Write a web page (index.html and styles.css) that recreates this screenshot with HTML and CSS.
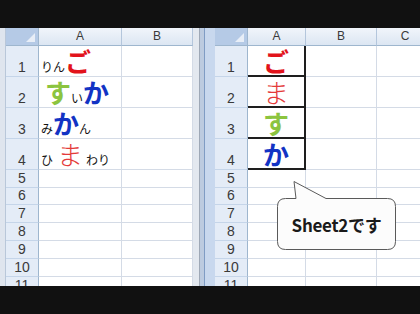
FILE: index.html
```html
<!DOCTYPE html>
<html lang="ja">
  <head>
    <meta charset="UTF-8" />
    <title>Sheet1 / Sheet2</title>
    <link rel="stylesheet" href="styles.css">
  </head>
  <body>
    <div class="screen">
      <div class="bar"></div>

      <div class="panes">
        <!-- Fenêtre gauche : Sheet1 -->
        <div class="pane pane-left">
          <div class="edge"></div>
          <div class="sheet sheet-one">
            <div class="corner"></div><div class="col">A</div><div class="col">B</div>

            <div class="row">1</div>
            <div class="cell words"><span class="small">りん</span><span class="big red">ご</span></div>
            <div class="cell"></div>

            <div class="row">2</div>
            <div class="cell words"><span class="big green indent">す</span><span class="small">い</span><span class="big blue">か</span></div>
            <div class="cell"></div>

            <div class="row">3</div>
            <div class="cell words"><span class="small">み</span><span class="big blue">か</span><span class="small">ん</span></div>
            <div class="cell"></div>

            <div class="row">4</div>
            <div class="cell words"><span class="small">ひ</span><span class="big thin gap">ま</span><span class="small">わり</span></div>
            <div class="cell"></div>

            <div class="row">5</div><div class="cell"></div><div class="cell"></div>
            <div class="row">6</div><div class="cell"></div><div class="cell"></div>
            <div class="row">7</div><div class="cell"></div><div class="cell"></div>
            <div class="row">8</div><div class="cell"></div><div class="cell"></div>
            <div class="row">9</div><div class="cell"></div><div class="cell"></div>
            <div class="row">10</div><div class="cell"></div><div class="cell"></div>
            <div class="row">11</div><div class="cell"></div><div class="cell"></div>
          </div>
          <div class="side"></div>
        </div>

        <div class="split"></div>

        <!-- Fenêtre droite : Sheet2 -->
        <div class="pane pane-right">
          <div class="sheet sheet-two">
            <div class="corner"></div><div class="col">A</div><div class="col">B</div><div class="col">C</div>

            <div class="row">1</div><div class="cell kana"><span class="big red">ご</span></div><div class="cell"></div><div class="cell"></div>
            <div class="row">2</div><div class="cell kana"><span class="big thin">ま</span></div><div class="cell"></div><div class="cell"></div>
            <div class="row">3</div><div class="cell kana"><span class="big green">す</span></div><div class="cell"></div><div class="cell"></div>
            <div class="row">4</div><div class="cell kana"><span class="big blue">か</span></div><div class="cell"></div><div class="cell"></div>

            <div class="row">5</div><div class="cell"></div><div class="cell"></div><div class="cell"></div>
            <div class="row">6</div><div class="cell"></div><div class="cell"></div><div class="cell"></div>
            <div class="row">7</div><div class="cell"></div><div class="cell"></div><div class="cell"></div>
            <div class="row">8</div><div class="cell"></div><div class="cell"></div><div class="cell"></div>
            <div class="row">9</div><div class="cell"></div><div class="cell"></div><div class="cell"></div>
            <div class="row">10</div><div class="cell"></div><div class="cell"></div><div class="cell"></div>
            <div class="row">11</div><div class="cell"></div><div class="cell"></div><div class="cell"></div>
          </div>

          <!-- Bulle -->
          <div class="balloon">
            <svg viewBox="0 0 120 70" xmlns="http://www.w3.org/2000/svg">
              <path d="M8.5 17.5 H19 L17 0.5 L49 17.5 H110.5 Q118.5 17.5 118.5 25.5 V60.5 Q118.5 68.5 110.5 68.5 H8.5 Q0.5 68.5 0.5 60.5 V25.5 Q0.5 17.5 8.5 17.5 Z" />
            </svg>
            <div class="balloon-text">Sheet2です</div>
          </div>
        </div>
      </div>

      <div class="bar bar-bottom"></div>
    </div>
  </body>
</html>
```

FILE: styles.css
```css
body {
  margin: 0;
  background-color: #111111;
  font-family: "Liberation Sans", Arial, sans-serif;
}

.screen {
  width: 420px;
  height: 314px;
  display: flex;
  flex-direction: column;
  overflow: hidden;
}

.bar {
  height: 28px;
  background-color: #111111;
}

.bar-bottom {
  height: 28px;
}

.panes {
  height: 258px;
  display: flex;
  overflow: hidden;
}

.pane {
  display: flex;
  height: 258px;
  overflow: hidden;
  background-color: #ffffff;
}

.pane-left {
  width: 200px;
}

.pane-right {
  width: 205px;
  position: relative;
}

.edge {
  width: 6px;
  flex-shrink: 0;
  background-color: #dfe5ee;
  border-right: 1px solid #b9c7d9;
  box-sizing: border-box;
}

.side {
  width: 7px;
  flex-shrink: 0;
  background-color: #e3e8ef;
  border-right: 1px solid #9ea8b6;
  box-sizing: border-box;
}

/* Séparateur entre les deux fenêtres */
.split {
  width: 15px;
  flex-shrink: 0;
  background: linear-gradient(to right, #bccbe0 0, #bccbe0 4px, #7f9cc4 4px, #7f9cc4 5px, #c8d8ee 5px);
}

/* Grille */
.sheet {
  display: grid;
  grid-template-rows: 18px 31px 31px 31px 31px 18px 17px 18px 18px 18px 18px 18px;
  flex-shrink: 0;
}

.sheet-one {
  grid-template-columns: 33px 83px 71px;
}

.sheet-two {
  grid-template-columns: 33px 58px 71px 57px;
}

.sheet > div {
  box-sizing: border-box;
}

.corner {
  background-color: #b5cae6;
  border-right: 1px solid #9eb6ce;
  border-bottom: 1px solid #9eb6ce;
  position: relative;
}

.corner::after {
  content: "";
  position: absolute;
  right: 3px;
  bottom: 3px;
  border-left: 9px solid transparent;
  border-bottom: 9px solid #e8eef7;
}

.col {
  background: linear-gradient(#f1f5fb, #dce6f2);
  border-right: 1px solid #b4c6dc;
  border-bottom: 1px solid #9eb6ce;
  color: #3a3a3a;
  font-size: 12px;
  line-height: 17px;
  text-align: center;
}

.row {
  background-color: #e4ecf7;
  border-right: 1px solid #9eb6ce;
  border-bottom: 1px solid #c5d5e9;
  color: #3a3a3a;
  font-size: 14px;
  line-height: 15px;
  text-align: center;
  display: flex;
  align-items: flex-end;
  justify-content: center;
  padding-bottom: 1px;
}

.cell {
  border-right: 1px solid #d4dbe6;
  border-bottom: 1px solid #d4dbe6;
}

/* Textes en kana */
.words {
  display: flex;
  align-items: flex-end;
  padding: 0 0 2px 2px;
  font-family: "Noto Sans CJK JP", sans-serif;
  white-space: nowrap;
}

.small {
  font-size: 12px;
  line-height: 15px;
  color: #111111;
}

.big {
  font-size: 26px;
  line-height: 26px;
  font-weight: 700;
  font-family: "Noto Sans CJK JP", sans-serif;
}

.red {
  color: #e2131b;
}

.green {
  color: #8cc43f;
}

.blue {
  color: #1233c4;
}

.thin {
  color: #e43a3a;
  font-weight: 300;
}

.indent {
  margin-left: 4px;
}

.gap {
  margin: 0 3px 0 4px;
}

.kana {
  display: flex;
  align-items: center;
  justify-content: center;
  border-right: 2px solid #1e1e1e;
  border-bottom: 2px solid #1e1e1e;
  padding-top: 1px;
}

.kana .big {
  line-height: 26px;
}

/* Bulle "Sheet2です" */
.balloon {
  position: absolute;
  left: 62px;
  top: 153px;
  width: 120px;
  height: 70px;
}

.balloon svg {
  display: block;
  width: 120px;
  height: 70px;
  fill: #fcfcfc;
  stroke: #5a5a5a;
  stroke-width: 1;
}

.balloon-text {
  position: absolute;
  left: 0;
  top: 17px;
  width: 119px;
  height: 52px;
  display: flex;
  align-items: center;
  justify-content: center;
  font-family: "Noto Sans CJK JP", sans-serif;
  font-weight: 700;
  font-size: 17px;
  color: #1a1a1a;
  letter-spacing: -0.3px;
}
```
